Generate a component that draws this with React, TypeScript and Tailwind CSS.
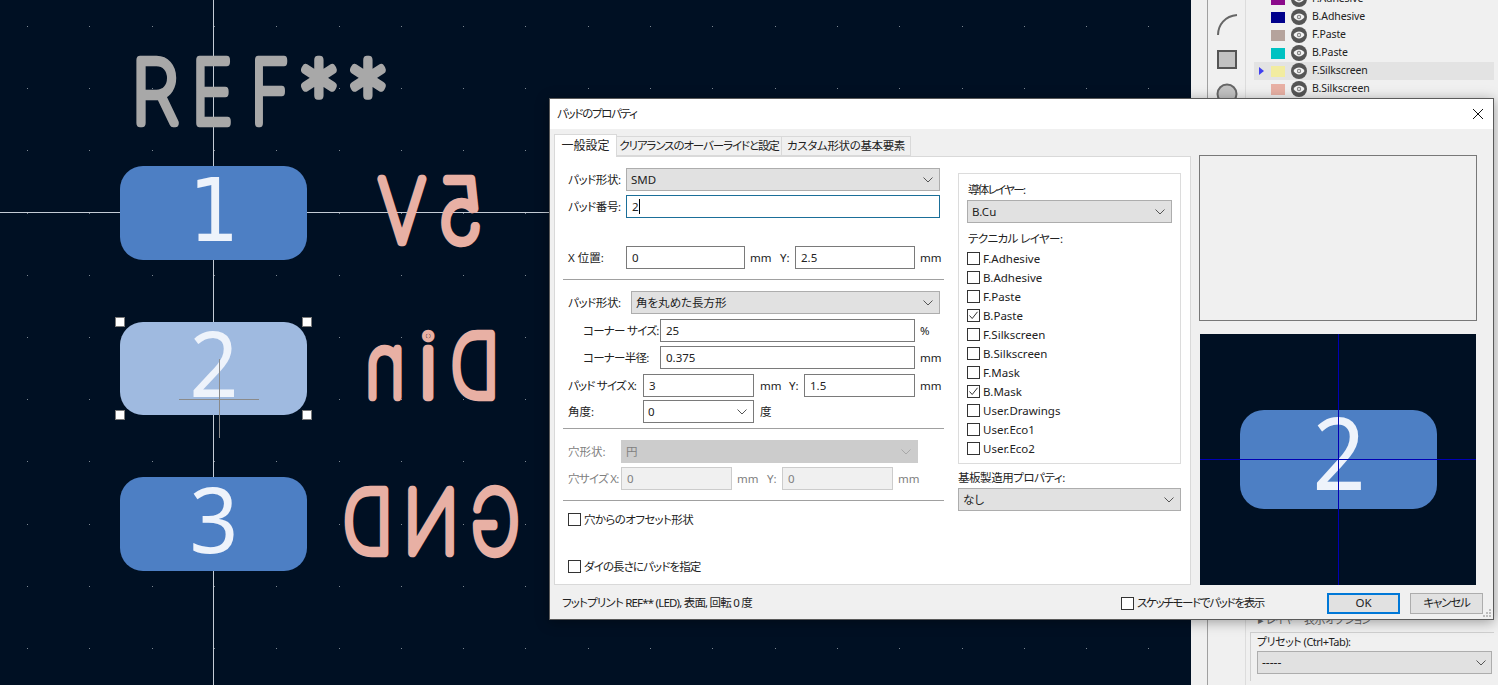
import React from "react";

const XS = Array.from({ length: 19 }, (_, i) => Math.round(27 + 62.3 * i));
const YS = Array.from({ length: 11 }, (_, i) => Math.round(26 + 62.2 * i));

function Stroke({ ch, cx, y, sx, fill, mirror, size = 87 }: { ch: string; cx: number; y: number; sx: number; fill: string; mirror?: boolean; size?: number }) {
  return (
    <text
      transform={`translate(${cx},${y}) scale(${mirror ? -sx : sx},1)`}
      textAnchor="middle"
      fontFamily="Inter, sans-serif"
      fontWeight={100}
      fontSize={size}
      fill={fill}
      stroke={fill}
      strokeWidth={8.5}
      strokeLinejoin="round"
      strokeLinecap="round"
    >
      {ch}
    </text>
  );
}

function PadNum({ x, y, size, sx = 0.93, children, font = "'Noto Sans', sans-serif" }: { x: number; y: number; size: number; sx?: number; children: string; font?: string }) {
  return (
    <text transform={`translate(${x},${y}) scale(${sx},1)`} textAnchor="middle" fontFamily={font} fontSize={size} fill="#eef3fb">
      {children}
    </text>
  );
}

const PINK = "#e8b0a4";

function Board() {
  return (
    <svg width={1191} height={685} className="block">
      {YS.map((y) => XS.map((x) => <rect key={x + "-" + y} x={x} y={y} width={1} height={1} fill="#7d8791" />))}
      <rect x={213} y={0} width={1} height={685} fill="#c4ccd6" />
      <rect x={0} y={212} width={1191} height={1} fill="#c4ccd6" />
      <Stroke ch="R" cx={155} y={123} sx={0.88} fill="#a8a8a8" />
      <Stroke ch="E" cx={212} y={123} sx={0.8} fill="#a8a8a8" />
      <Stroke ch="F" cx={270} y={123} sx={0.76} fill="#a8a8a8" />
      <Stroke ch="*" cx={319} y={123} sx={0.88} fill="#a8a8a8" />
      <Stroke ch="*" cx={368} y={123} sx={0.88} fill="#a8a8a8" />
      <rect x={120} y={166} width={187} height={94} rx={23} fill="#4d7fc4" />
      <rect x={120} y={322} width={187} height={93} rx={23} fill="#9fbae0" />
      <rect x={120} y={477} width={187} height={94} rx={23} fill="#4d7fc4" />
      <PadNum x={214} y={241} size={88} sx={0.9} font="'DejaVu Sans', sans-serif">1</PadNum>
      <PadNum x={214} y={397} size={92}>2</PadNum>
      <PadNum x={214} y={553} size={92}>3</PadNum>
      <Stroke mirror ch="5" cx={461} y={242} sx={0.88} fill={PINK} />
      <Stroke mirror ch="V" cx={402} y={242} sx={0.84} fill={PINK} />
      <Stroke mirror ch="D" cx={475} y={397} sx={0.78} fill={PINK} />
      <Stroke mirror ch="i" cx={428} y={397} sx={1} fill={PINK} />
      <Stroke mirror ch="n" cx={385} y={397} sx={0.78} fill={PINK} />
      <Stroke mirror ch="G" cx={495} y={553} sx={0.76} fill={PINK} />
      <Stroke mirror ch="N" cx={431} y={553} sx={0.82} fill={PINK} />
      <Stroke mirror ch="D" cx={368} y={553} sx={0.8} fill={PINK} />
      <rect x={179} y={399} width={80} height={1} fill="#8a8a8a" />
      <rect x={219} y={359} width={1} height={79} fill="#8a8a8a" />
      {[[120, 322], [307, 322], [120, 415], [307, 415]].map(([x, y]) => (
        <rect key={x + "." + y} x={x - 4.5} y={y - 4.5} width={9} height={9} fill="#ffffff" stroke="#7a7a7a" strokeWidth={1} />
      ))}
    </svg>
  );
}

function Eye() {
  return (
    <svg width={16} height={16} viewBox="0 0 16 16" className="shrink-0">
      <circle cx={8} cy={8} r={8} fill="#555555" />
      <path d="M2.5 8C4 5.6 6 4.6 8 4.6S12 5.6 13.5 8C12 10.4 10 11.4 8 11.4S4 10.4 2.5 8Z" fill="#f4f4f4" />
      <circle cx={8} cy={8} r={2.2} fill="#8a8a8a" />
      <circle cx={8} cy={8} r={1} fill="#f4f4f4" />
    </svg>
  );
}

const LAYERS = [
  { name: "F.Adhesive", color: "#8b0a8b" },
  { name: "B.Adhesive", color: "#00008b" },
  { name: "F.Paste", color: "#b5a39c" },
  { name: "B.Paste", color: "#00c2c2" },
  { name: "F.Silkscreen", color: "#f2eca0", active: true },
  { name: "B.Silkscreen", color: "#e8b0a4" },
];

function SidePanel() {
  return (
    <div className="flex w-[307px] h-[685px] bg-[#f0f0f0] text-[#222]">
      <div className="w-[17px] border-r border-[#a0a0a0] shrink-0" />
      <div className="w-[38px] shrink-0 border-r border-[#dcdcdc] flex flex-col items-center pt-[12px] gap-[12px]">
        <svg width={24} height={24} viewBox="0 0 24 24">
          <path d="M3 23C3 13 10 4 22 3" fill="none" stroke="#666" strokeWidth={2} />
        </svg>
        <svg width={22} height={22} viewBox="0 0 22 22">
          <rect x={2} y={3} width={18} height={17} fill="#c2c2c2" stroke="#555" strokeWidth={2} />
        </svg>
        <svg width={22} height={22} viewBox="0 0 22 22">
          <circle cx={11} cy={12} r={9.5} fill="#c2c2c2" stroke="#666" strokeWidth={2} />
        </svg>
      </div>
      <div className="flex-1 pl-[8px] pr-[4px] flex flex-col h-full">
        <div className="-mt-[10px] w-[240px]">
          {LAYERS.map((l) => (
            <div key={l.name} className={"flex items-center h-[18px] " + (l.active ? "bg-[#e3e3e3]" : "")}>
              <div className="w-[17px] flex justify-center pl-[2px] -translate-x-[2px]">
                {l.active && <div className="border-l-[5px] border-l-[#4040f0] border-y-[4px] border-y-transparent" />}
              </div>
              <div className="w-[14px] h-[11px]" style={{ backgroundColor: l.color }} />
              <div className="ml-[6px]"><Eye /></div>
              <span className="ml-[5px] text-[10.5px] tracking-[-0.1px]">{l.name}</span>
            </div>
          ))}
        </div>
        <div className="mt-auto mb-[6px] -ml-[4px] pl-[8px] h-[13px] leading-[13px] text-[11px] text-[#666] whitespace-nowrap tracking-[-0.5px]">▸ レイヤー表示オプション</div>
        <div className="mb-[4px] -ml-[4px] border-l border-t border-[#d0d0d0] pl-[6px] pr-[2px] pt-[1px] pb-[7px]">
          <div className="h-[16px] leading-[16px] text-[11px] tracking-[-0.5px] whitespace-nowrap">プリセット (Ctrl+Tab):</div>
          <div className="mt-[1px] h-[23px] w-[235px] bg-[#e1e1e1] border border-[#adadad] flex items-center px-[4px] text-[12px]">
            <span className="flex-1">-----</span>
            <Chevron />
          </div>
        </div>
      </div>
    </div>
  );
}

function Chevron({ color = "#555" }: { color?: string }) {
  return (
    <svg width={10} height={6} viewBox="0 0 10 6" className="shrink-0 mr-[1px]">
      <path d="M0.5 0.5L5 5L9.5 0.5" fill="none" stroke={color} strokeWidth={1} />
    </svg>
  );
}

function Select({ w, value, white, disabled }: { w: string; value: string; white?: boolean; disabled?: boolean }) {
  const cls = disabled
    ? "bg-[#cccccc] border-[#cccccc] text-[#808080]"
    : white
    ? "bg-white border-[#7a7a7a]"
    : "bg-[#e1e1e1] border-[#adadad]";
  return (
    <div className={"h-[23px] border flex items-center pl-[4px] pr-[5px] " + cls + " " + w}>
      <span className="flex-1">{value}</span>
      <Chevron color={disabled ? "#a8a8a8" : "#555"} />
    </div>
  );
}

function Input({ w, value, disabled }: { w: string; value: string; disabled?: boolean }) {
  return (
    <div
      className={
        "h-[23px] border flex items-center pl-[5px] " +
        (disabled ? "bg-[#f0f0f0] border-[#cccccc] text-[#808080] " : "bg-white border-[#7a7a7a] ") +
        w
      }
    >
      {value}
    </div>
  );
}

function Check({ on }: { on?: boolean }) {
  return (
    <div className="w-[13px] h-[13px] border border-[#333] bg-white shrink-0 flex items-center justify-center">
      {on && (
        <svg width={11} height={11} viewBox="0 0 11 11">
          <path d="M1.5 5.5L4.2 8.5L9.5 1.8" fill="none" stroke="#333" strokeWidth={1} />
        </svg>
      )}
    </div>
  );
}

function Rule({ mt }: { mt: string }) {
  return <div className={"h-px bg-[#a0a0a0] " + mt} />;
}

function Row({ mt, children, muted }: { mt: string; children: React.ReactNode; muted?: boolean }) {
  return <div className={"flex items-center h-[23px] pl-[5px] whitespace-nowrap " + mt + (muted ? " text-[#808080]" : "")}>{children}</div>;
}

function GeneralTab() {
  return (
    <div className="w-[381px] ml-[8px] pt-[11px] shrink-0">
      <Row mt="">
        <span className="w-[58px] tracking-[-0.4px]">パッド形状:</span>
        <Select w="w-[314px]" value="SMD" />
      </Row>
      <Row mt="mt-[4px]">
        <span className="w-[58px] tracking-[-0.4px]">パッド番号:</span>
        <div className="h-[23px] w-[314px] border border-[#1b6f99] bg-white flex items-center pl-[5px]">
          2<span className="w-px h-[15px] bg-black" />
        </div>
      </Row>
      <Row mt="mt-[28px]">
        <span className="w-[58px]">X 位置:</span>
        <Input w="w-[119px]" value="0" />
        <span className="w-[35px] pl-[5px]">mm</span>
        <span className="w-[15px]">Y:</span>
        <Input w="w-[120px]" value="2.5" />
        <span className="pl-[5px]">mm</span>
      </Row>
      <Rule mt="mt-[10px]" />
      <Row mt="mt-[11px]">
        <span className="w-[63px] tracking-[-0.4px]">パッド形状:</span>
        <Select w="w-[309px]" value="角を丸めた長方形" />
      </Row>
      <Row mt="mt-[5px]">
        <span className="w-[92px] pl-[15px] tracking-[-0.7px]">コーナー サイズ:</span>
        <Input w="w-[255px]" value="25" />
        <span className="pl-[5px]">%</span>
      </Row>
      <Row mt="mt-[4px]">
        <span className="w-[92px] pl-[15px] tracking-[-0.7px]">コーナー半径:</span>
        <Input w="w-[255px]" value="0.375" />
        <span className="pl-[5px]">mm</span>
      </Row>
      <Row mt="mt-[5px]">
        <span className="w-[75px] tracking-[-0.8px]">パッド サイズ X:</span>
        <Input w="w-[111px]" value="3" />
        <span className="w-[35px] pl-[6px]">mm</span>
        <span className="w-[15px]">Y:</span>
        <Input w="w-[111px]" value="1.5" />
        <span className="pl-[5px]">mm</span>
      </Row>
      <Row mt="mt-[3px]">
        <span className="w-[75px]">角度:</span>
        <Select w="w-[111px]" value="0" white />
        <span className="pl-[6px]">度</span>
      </Row>
      <Rule mt="mt-[5px]" />
      <Row mt="mt-[11px]" muted>
        <span className="w-[53px]">穴形状:</span>
        <Select w="w-[297px]" value="円" disabled />
      </Row>
      <Row mt="mt-[4px]" muted>
        <span className="w-[53px] tracking-[-0.7px]">穴サイズ X:</span>
        <Input w="w-[111px]" value="0" disabled />
        <span className="w-[35px] pl-[5px]">mm</span>
        <span className="w-[15px]">Y:</span>
        <Input w="w-[111px]" value="0" disabled />
        <span className="pl-[5px]">mm</span>
      </Row>
      <Rule mt="mt-[10px]" />
      <div className="mt-[12px] pl-[5px] flex items-center gap-[3px] h-[13px]">
        <Check />
        <span className="tracking-[-0.6px]">穴からのオフセット形状</span>
      </div>
      <div className="mt-[34px] pl-[5px] flex items-center gap-[3px] h-[13px]">
        <Check />
        <span className="tracking-[-0.9px]">ダイの長さにパッドを指定</span>
      </div>
    </div>
  );
}

const TECH = [
  ["F.Adhesive"],
  ["B.Adhesive"],
  ["F.Paste"],
  ["B.Paste", true],
  ["F.Silkscreen"],
  ["B.Silkscreen"],
  ["F.Mask"],
  ["B.Mask", true],
  ["User.Drawings"],
  ["User.Eco1"],
  ["User.Eco2"],
] as [string, boolean?][];

function LayersColumn() {
  return (
    <div className="ml-[14px] w-[223px] shrink-0 pt-[16px]">
      <div className="h-[291px] border border-[#dcdcdc] pl-[8px] pr-[8px] pt-[7px]">
        <div className="h-[18px] leading-[18px] tracking-[-1.7px] pl-px">導体レイヤー:</div>
        <div className="mt-[1px]"><Select w="w-[205px]" value="B.Cu" /></div>
        <div className="mt-[7px] h-[18px] leading-[18px] tracking-[-0.6px] pl-px">テクニカル レイヤー:</div>
        <div className="mt-[1px] flex flex-col">
          {TECH.map(([name, on]) => (
            <div key={name} className="h-[19px] flex items-center gap-[3px]">
              <Check on={on} />
              <span>{name}</span>
            </div>
          ))}
        </div>
      </div>
      <div className="mt-[5px] h-[18px] leading-[18px] tracking-[-0.45px]">基板製造用プロパティ:</div>
      <div className="mt-px"><Select w="w-[223px]" value="なし" /></div>
    </div>
  );
}

function PreviewColumn() {
  return (
    <div className="ml-[8px] w-[278px] shrink-0 pt-[26px]">
      <div className="h-[166px] bg-[#f0f0f0] border border-[#787878]" />
      <svg width={276} height={251} className="block mt-[13px] ml-[1px] bg-[#001023]">
        <rect x={40} y={76} width={197} height={99} rx={24} fill="#4d7fc4" />
        <PadNum x={139} y={156} size={100}>2</PadNum>
        <rect x={0} y={125} width={276} height={1} fill="#0000b4" />
        <rect x={138} y={0} width={1} height={251} fill="#0000b4" />
      </svg>
    </div>
  );
}

function Dialog() {
  return (
    <div className="absolute left-[549px] top-[98px] w-[945px] h-[522px] border border-[#5a5a5a] bg-[#f0f0f0] shadow-[0_2px_12px_rgba(0,0,0,0.35)] flex flex-col text-[11.5px] text-[#222]">
      <div className="h-[30px] bg-white flex items-center pl-[7px] pr-[8px] shrink-0">
        <span className="flex-1 tracking-[-1.3px]">パッドのプロパティ</span>
        <svg width={12} height={12} viewBox="0 0 12 12" className="mr-[1px]">
          <path d="M1 1L11 11M11 1L1 11" stroke="#111" strokeWidth={1} fill="none" />
        </svg>
      </div>
      <div className="flex h-[456px] pl-[4px] shrink-0">
        <div className="w-[637px] shrink-0 pt-[6px] flex flex-col">
          <div className="flex h-[21px] items-end relative z-10 shrink-0">
            <div className="h-[23px] -mb-px w-[63px] bg-white border border-b-0 border-[#d9d9d9] flex items-center justify-center text-[12px]">一般設定</div>
            <div className="h-[20px] w-[165px] bg-[#f0f0f0] border border-[#d9d9d9] border-l-0 flex items-center justify-center whitespace-nowrap tracking-[-1.1px]">クリアランスのオーバーライドと設定</div>
            <div className="h-[20px] w-[129px] bg-[#f0f0f0] border border-[#d9d9d9] border-l-0 flex items-center justify-center whitespace-nowrap tracking-[-0.35px]">カスタム形状の基本要素</div>
          </div>
          <div className="h-[429px] shrink-0 bg-white border border-[#d9d9d9] flex">
            <GeneralTab />
            <LayersColumn />
          </div>
        </div>
        <PreviewColumn />
      </div>
      <div className="relative flex-1 flex items-center pl-[12px] pr-[10px] pt-[2px]">
        <span className="flex-1 tracking-[-0.8px]">フットプリント REF** (LED), 表面, 回転 0 度</span>
        <div className="w-[206px] flex items-center gap-[3px]">
          <Check />
          <span className="tracking-[-1.3px]">スケッチモードでパッドを表示</span>
        </div>
        <div className="w-[73px] h-[21px] bg-[#e1e1e1] border-2 border-[#0078d7] flex items-center justify-center">OK</div>
        <div className="ml-[10px] w-[73px] h-[21px] bg-[#e1e1e1] border border-[#adadad] flex items-center justify-center tracking-[-1.2px]">キャンセル</div>
        <svg width={10} height={10} viewBox="0 0 10 10" className="absolute right-[1px] bottom-[1px]">
          {[[7, 1], [4, 4], [7, 4], [1, 7], [4, 7], [7, 7]].map(([x, y]) => (
            <rect key={x + "_" + y} x={x} y={y} width={2} height={2} fill="#bcbcbc" />
          ))}
        </svg>
      </div>
    </div>
  );
}

export default function App() {
  return (
    <div className="relative flex w-[1498px] h-[685px] overflow-hidden bg-[#001023] font-['Noto_Sans','Noto_Sans_CJK_JP',sans-serif] [font-feature-settings:'palt']">
      <div className="w-[1191px] shrink-0">
        <Board />
      </div>
      <SidePanel />
      <Dialog />
    </div>
  );
}
